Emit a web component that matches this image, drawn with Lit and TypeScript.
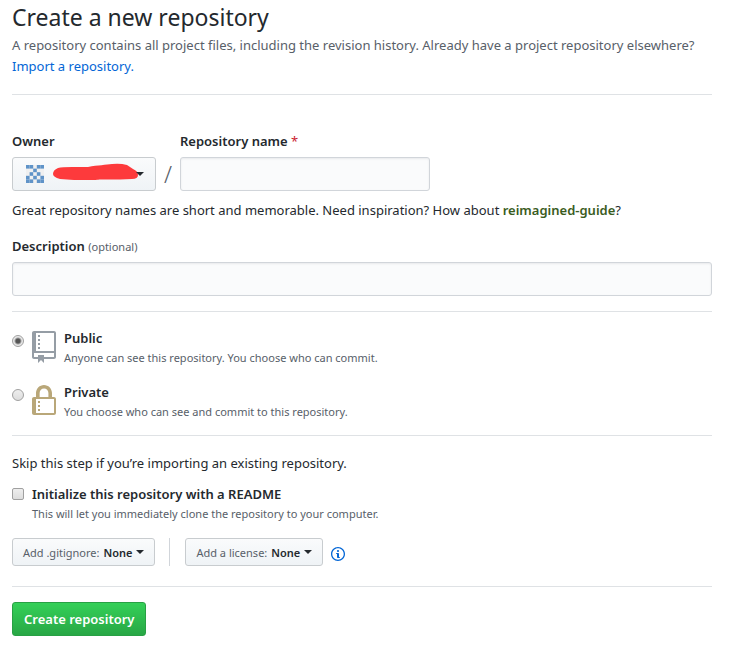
import { LitElement, html, css, svg } from "lit";
import { customElement } from "lit/decorators.js";

const AVATAR_ROWS = ["11011", "00100", "01010", "10101", "11011"];

@customElement("app-root")
export class AppRoot extends LitElement {
  static styles = css`
    :host {
      display: block;
      box-sizing: border-box;
      max-width: 724px;
      padding: 0 12px 20px;
      background: #fff;
      color: #24292e;
      font: 13px/21px "Noto Sans", "Open Sans", sans-serif;
    }
    * { box-sizing: border-box; }
    h1, p { margin: 0; font-weight: 400; }
    button, input { font: inherit; color: inherit; margin: 0; }
    a { color: #0366d6; text-decoration: none; }
    hr { height: 1px; margin: 0; border: 0; background: #dfe2e5; }
    .title { font-size: 23px; line-height: 35px; }
    .lead { color: #586069; margin-bottom: 17px; }
    .label { display: block; font-weight: 600; margin-bottom: 5px; }
    .required { color: #cb2431; font-weight: 400; }
    .optional { font-size: 11px; font-weight: 400; color: #586069; }
    .names { display: flex; align-items: flex-end; margin-top: 36px; }
    .slash { width: 24px; text-align: center; font-size: 23px; font-weight: 300; line-height: 34px; color: #586069; }
    .box {
      display: block;
      height: 34px;
      width: 100%;
      padding: 0 8px;
      border: 1px solid #d1d5da;
      border-radius: 3px;
      background: #fafbfc;
      box-shadow: inset 0 1px 2px rgba(27, 31, 35, 0.075);
    }
    .repo { width: 250px; }
    .hint { margin: 9px 0 15px; }
    .suggestion { color: #3a5c1e; font-weight: 600; }
    .btn {
      display: flex;
      align-items: center;
      border: 1px solid #c8cccf;
      border-radius: 3px;
      background: linear-gradient(#fafbfc, #eff3f6);
      white-space: nowrap;
    }
    .owner { width: 144px; height: 34px; padding: 0 12px 0 13px; }
    .scribble { margin-left: 8px; overflow: visible; }
    .caret { border: 4px solid transparent; border-top-color: currentColor; border-bottom: 0; margin-left: 4px; }
    .tucked { margin-left: -4px; }
    .after-box { margin-top: 15px; }
    .choice { display: grid; grid-template-columns: 12px 24px 1fr; column-gap: 8px; margin-top: 12px; }
    .choice .icon { height: 32px; margin-top: 7px; }
    .name { display: block; font-weight: 600; line-height: 28px; height: 25px; }
    .note { display: block; font-size: 11px; line-height: 17px; color: #586069; }
    .tick { appearance: none; width: 12px; height: 12px; border: 1px solid #a0a0a0; background: linear-gradient(#eee, #ddd); }
    .radio { border-radius: 50%; margin-top: 11px; }
    .radio:checked { background: radial-gradient(circle, #555 2px, #e8e8e8 4px); }
    .check { border-radius: 2px; margin-top: 5px; }
    .skip { margin: 17px 0 9px; }
    .readme { display: grid; grid-template-columns: 12px 1fr; column-gap: 8px; }
    .strong { display: block; font-weight: 600; line-height: 22px; }
    .extras { display: flex; align-items: center; margin: 16px 0 20px; }
    .small { height: 28px; padding: 0 10px; font-size: 11px; color: #586069; }
    .small b { margin-left: 4px; font-weight: 600; color: #24292e; }
    .small .caret { color: #24292e; }
    .bar { width: 1px; height: 28px; margin: 0 15px 0 14px; background: #d1d5da; }
    .info { margin: 4px 0 0 8px; }
    .submit {
      height: 34px;
      margin-top: 15px;
      padding: 0 11px;
      border: 1px solid #28a044;
      border-radius: 3px;
      background: linear-gradient(#34d058, #28a745);
      color: #fff;
      font-weight: 600;
    }
    svg { display: block; flex: none; }
  `;

  render() {
    return html`
      <h1 class="title">Create a new repository</h1>
      <p class="lead">
        A repository contains all project files, including the revision history. Already have a project repository elsewhere?
        <a href="#import">Import a repository.</a>
      </p>
      <hr />
      <form @submit=${(e: Event) => e.preventDefault()}>
        <div class="names">
          <div>
            <label class="label" for="owner">Owner</label>
            <button class="btn owner" id="owner" type="button">
              <svg width="18" height="18" viewBox="0 0 20 20">
                <rect width="20" height="20" fill="#f0f0f0" />
                ${AVATAR_ROWS.flatMap((row, y) => [...row].map((c, x) =>
                  c === "1" ? svg`<rect x=${x * 4} y=${y * 4} width="4" height="4" fill="#5f93c8" />` : null))}
              </svg>
              <svg class="scribble" width="88" height="18" viewBox="0 0 88 18">
                <path d="M6 3 Q10 2 20 2 L36 2 C46 0 54 0 60 -1 Q68 -2 75 0 L81 4 Q86 6 86 10 Q86 14 80 14 C64 15 48 14 44 15 L22 15 L8 14 Q1 12 1 9 Q1 5 6 3Z" fill="#fd3a3c" />
              </svg>
              <span class="caret tucked"></span>
            </button>
          </div>
          <span class="slash">/</span>
          <div>
            <label class="label" for="repo">Repository name <span class="required">*</span></label>
            <input class="box repo" id="repo" type="text" />
          </div>
        </div>
        <p class="hint">
          Great repository names are short and memorable. Need inspiration? How about <span class="suggestion">reimagined-guide</span>?
        </p>
        <label class="label" for="desc">Description <span class="optional">(optional)</span></label>
        <input class="box" id="desc" type="text" />
        <hr class="after-box" />
        <div class="choice">
          <input class="tick radio" id="public" name="visibility" type="radio" checked />
          <svg class="icon" width="24" height="32" viewBox="0 0 12 16" fill="#959da5">
            <path fill-rule="evenodd" d="M4 9H3V8h1v1zm0-3H3v1h1V6zm0-2H3v1h1V4zm0-2H3v1h1V2zm8-1v12c0 .55-.45 1-1 1H6v2l-1.5-1.5L3 16v-2H1c-.55 0-1-.45-1-1V1c0-.55.45-1 1-1h10c.55 0 1 .45 1 1zm-1 10H1v2h2v-1h3v1h5v-2zm0-10H2v9h9V1z" />
          </svg>
          <label for="public"><span class="name">Public</span><span class="note">Anyone can see this repository. You choose who can commit.</span></label>
        </div>
        <div class="choice">
          <input class="tick radio" id="private" name="visibility" type="radio" />
          <svg class="icon" width="24" height="32" viewBox="0 0 12 16" fill="#b9a779">
            <path fill-rule="evenodd" d="M4 13H3v-1h1v1zm8-6v7c0 .55-.45 1-1 1H1c-.55 0-1-.45-1-1V7c0-.55.45-1 1-1h1V4c0-2.2 1.8-4 4-4s4 1.8 4 4v2h1c.55 0 1 .45 1 1zM3.8 6h4.41V4c0-1.22-.98-2.2-2.2-2.2-1.22 0-2.2.98-2.2 2.2v2H3.8zM11 7H2v7h9V7zM4 8H3v1h1V8zm0 2H3v1h1v-1z" />
          </svg>
          <label for="private"><span class="name">Private</span><span class="note">You choose who can see and commit to this repository.</span></label>
        </div>
        <hr class="after-box" />
        <p class="skip">Skip this step if you’re importing an existing repository.</p>
        <div class="readme">
          <input class="tick check" id="readme" type="checkbox" />
          <label for="readme"><span class="strong">Initialize this repository with a README</span><span class="note">This will let you immediately clone the repository to your computer.</span></label>
        </div>
        <div class="extras">
          <button class="btn small" type="button">Add .gitignore: <b>None</b><span class="caret"></span></button>
          <span class="bar"></span>
          <button class="btn small" type="button">Add a license: <b>None</b><span class="caret"></span></button>
          <svg class="info" width="14" height="16" viewBox="0 0 14 16" fill="#0366d6">
            <path fill-rule="evenodd" d="M6.3 5.69a.942.942 0 0 1-.28-.7c0-.28.09-.52.28-.7.19-.18.42-.28.7-.28.28 0 .52.09.7.28.18.19.28.42.28.7 0 .28-.09.52-.28.7a1 1 0 0 1-.7.3c-.28 0-.52-.11-.7-.3zM8 7.99c-.02-.25-.11-.48-.31-.69-.2-.19-.42-.3-.69-.31H6c-.27.02-.48.13-.69.31-.2.2-.3.44-.31.69h1v3c.02.27.11.5.31.69.2.2.42.31.69.31h1c.27 0 .48-.11.69-.31.2-.19.3-.42.31-.69H8V7.98v.01zM7 2.3c-3.14 0-5.7 2.54-5.7 5.68 0 3.14 2.56 5.7 5.7 5.7s5.7-2.55 5.7-5.7c0-3.15-2.56-5.69-5.7-5.69v.01zM7 .98c3.86 0 7 3.14 7 7s-3.14 7-7 7-7-3.12-7-7 3.14-7 7-7z" />
          </svg>
        </div>
        <hr />
        <button class="submit" type="submit">Create repository</button>
      </form>
    `;
  }
}
